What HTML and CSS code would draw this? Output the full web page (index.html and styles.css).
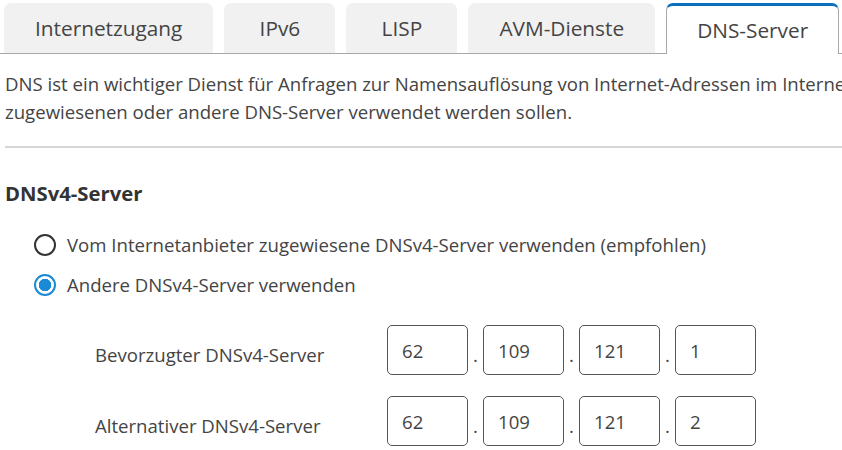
FILE: index.html
```html
<!DOCTYPE html>
<html lang="de">
<head>
<meta charset="utf-8">
<link rel="stylesheet" href="styles.css">
</head>
<body>
<nav class="tabs">
  <div class="tab">Internetzugang</div>
  <div class="tab">IPv6</div>
  <div class="tab">LISP</div>
  <div class="tab">AVM-Dienste</div>
  <div class="tab active">DNS-Server</div>
</nav>
<main class="content">
  <p class="intro"><span class="line">DNS ist ein wichtiger Dienst für Anfragen zur Namensauflösung von Internet-Adressen im Internet</span><span class="line">zugewiesenen oder andere DNS-Server verwendet werden sollen.</span></p>
  <hr class="sep">
  <h2 class="heading">DNSv4-Server</h2>
  <div class="options">
    <label class="option"><span class="radio"></span>Vom Internetanbieter zugewiesene DNSv4-Server verwenden (empfohlen)</label>
    <label class="option"><span class="radio checked"></span>Andere DNSv4-Server verwenden</label>
  </div>
  <div class="servers">
    <div class="row">
      <span class="label">Bevorzugter DNSv4-Server</span>
      <div class="ip">
        <span class="box">62</span><span class="dot">.</span>
        <span class="box">109</span><span class="dot">.</span>
        <span class="box">121</span><span class="dot">.</span>
        <span class="box">1</span>
      </div>
    </div>
    <div class="row">
      <span class="label">Alternativer DNSv4-Server</span>
      <div class="ip">
        <span class="box">62</span><span class="dot">.</span>
        <span class="box">109</span><span class="dot">.</span>
        <span class="box">121</span><span class="dot">.</span>
        <span class="box">2</span>
      </div>
    </div>
  </div>
</main>
</body>
</html>
```
FILE: styles.css
```css
html, body {
  margin: 0;
  padding: 0;
  background: #fff;
  overflow: hidden;
}
body {
  width: 842px;
  height: 450px;
  font-family: "Open Sans", "Noto Sans", sans-serif;
  font-size: 18.6px;
  color: #444;
}
.tabs {
  display: flex;
  gap: 11px;
  padding: 3px 0 0 4px;
  border-bottom: 1px solid #a8a8a8;
  height: 50px;
  box-sizing: content-box;
}
.tab {
  height: 50px;
  min-width: 111px;
  box-sizing: border-box;
  padding: 0 31px;
  display: flex;
  align-items: center;
  justify-content: center;
  background: #f1f1f1;
  border-radius: 7px 7px 0 0;
  font-size: 20.8px;
  color: #444;
  white-space: nowrap;
}
.tab.active {
  background: #fff;
  border: 1px solid #a8a8a8;
  border-top: 3px solid #0a6fbf;
  border-bottom: none;
  height: 51px;
  margin-bottom: -1px;
  padding: 0 30px;
}
.content {
  padding: 0 0 0 5px;
}
.intro {
  margin: 16px 0 0 0;
  line-height: 28px;
  width: 900px;
}
.line {
  display: block;
  white-space: nowrap;
}
.sep {
  margin: 20px 0 0 0;
  border: none;
  border-top: 2px solid #d6d6d6;
  height: 0;
}
.heading {
  margin: 31px 0 0 0;
  font-size: 20.3px;
  font-weight: 700;
  color: #333;
  line-height: 28px;
}
.options {
  display: flex;
  flex-direction: column;
  gap: 12px;
  margin: 24px 0 0 29px;
}
.option {
  display: flex;
  align-items: center;
  gap: 11px;
  line-height: 28px;
}
.radio {
  width: 18px;
  height: 18px;
  border: 2px solid #333;
  border-radius: 50%;
  box-sizing: content-box;
  flex: none;
}
.radio.checked {
  border-color: #1b8ad6;
  background: radial-gradient(circle, #1b8ad6 0 6px, #fff 6.5px);
}
.servers {
  display: flex;
  flex-direction: column;
  gap: 21px;
  margin: 26px 0 0 90px;
}
.row {
  display: flex;
  align-items: center;
}
.label {
  width: 292px;
  flex: none;
  padding-top: 9px;
}
.ip {
  display: flex;
  align-items: center;
}
.box {
  width: 81px;
  height: 50px;
  box-sizing: border-box;
  border: 1px solid #555;
  border-radius: 5px;
  padding-left: 14px;
  display: flex;
  align-items: center;
  color: #444;
}
.dot {
  width: 15px;
  text-align: center;
  padding-top: 8px;
}
```
